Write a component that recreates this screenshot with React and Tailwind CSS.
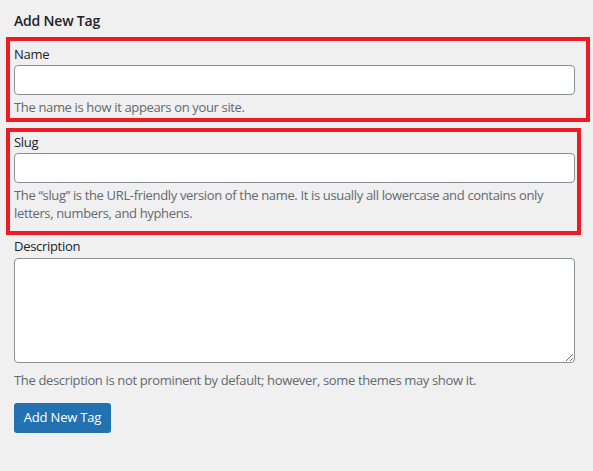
import { useState } from "react";

const font = { fontFamily: '"Open Sans", "Noto Sans", sans-serif' };

const Field = ({ label, id, help, value, onChange }) => {
  return (
    <div className="flex flex-col">
      <label htmlFor={id} className="text-[13px] leading-[18px] tracking-[-0.3px] text-[#1d2327]">
        {label}
      </label>
      <input
        id={id}
        name={id}
        type="text"
        value={value}
        onChange={onChange}
        className="mt-[2px] h-[30px] w-[561px] rounded-[4px] border border-[#8c8f94] bg-white px-2 text-[14px] outline-none"
      />
      <p className="mt-[3px] text-[13px] leading-[18px] tracking-[-0.35px] text-[#646970]">{help}</p>
    </div>
  );
};

export default function App() {
  const [data, setData] = useState({ name: "", slug: "", description: "" });

  const handleOnChange = (e) => {
    const { name, value } = e.target;
    setData((prev) => ({ ...prev, [name]: value }));
  };

  return (
    <div className="min-h-[471px] w-full bg-[#f0f0f1] pl-[6px]" style={font}>
      <h2 className="pl-[8px] pt-[11px] text-[14px] font-semibold leading-[20px] tracking-[-0.2px] text-[#1d2327]">
        Add New Tag
      </h2>

      <form className="mt-[6px] flex flex-col" onSubmit={(e) => e.preventDefault()}>
        {/* highlighted fields */}
        <div className="w-[584px] border-4 border-[#ed1c24] pl-[4px] pt-[4px] pb-[2px]">
          <Field
            label="Name"
            id="name"
            help="The name is how it appears on your site."
            value={data.name}
            onChange={handleOnChange}
          />
        </div>

        <div className="mt-[6px] w-[575px] border-4 border-[#ed1c24] pl-[4px] pt-[1px] pb-[9px]">
          <Field
            label="Slug"
            id="slug"
            help="The “slug” is the URL-friendly version of the name. It is usually all lowercase and contains only letters, numbers, and hyphens."
            value={data.slug}
            onChange={handleOnChange}
          />
        </div>

        <div className="ml-[8px] mt-[2px] flex flex-col">
          <label
            htmlFor="description"
            className="text-[13px] leading-[18px] tracking-[-0.3px] text-[#1d2327]"
          >
            Description
          </label>
          <textarea
            id="description"
            name="description"
            value={data.description}
            onChange={handleOnChange}
            className="mt-[3px] block h-[105px] w-[561px] rounded-[4px] border border-[#8c8f94] bg-white px-2 py-1 text-[14px] outline-none"
          />
          <p className="mt-[8px] text-[13px] leading-[18px] tracking-[-0.35px] text-[#646970]">
            The description is not prominent by default; however, some themes may show it.
          </p>
          <button
            type="submit"
            className="mt-[14px] h-[30px] w-[97px] rounded-[3px] bg-[#2271b1] text-[13px] tracking-[-0.2px] text-white"
          >
            Add New Tag
          </button>
        </div>
      </form>
    </div>
  );
}
